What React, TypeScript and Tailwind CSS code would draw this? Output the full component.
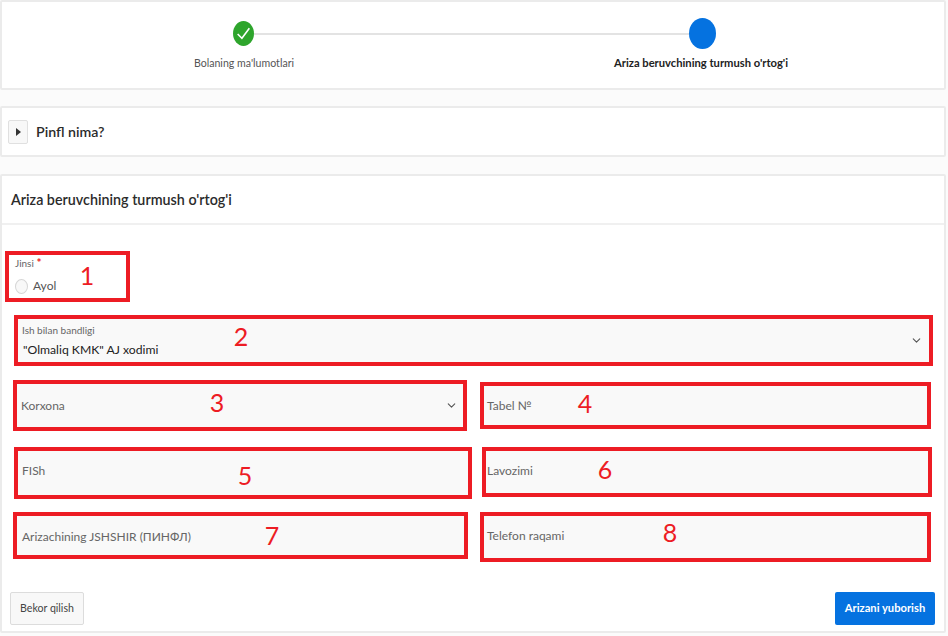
import { ChevronDown } from 'lucide-react';

const font = 'font-["Lato",sans-serif]';
const mark = 'absolute font-["Lato",sans-serif] text-[25px] leading-none text-[#ed1c24] -translate-x-1/2 -translate-y-1/2';

function Field({
  box,
  label,
  num,
  numPos,
  chevron,
}: {
  box: string;
  label: string;
  num: string;
  numPos: string;
  chevron?: boolean;
}) {
  return (
    <div className={`relative flex shrink-0 items-center justify-between border-[4px] border-[#ed1c24] bg-[#f9f9f9] ${box}`}>
      <span className="text-[12px] text-[#666]">{label}</span>
      {chevron && <ChevronDown className="mr-[5px] -mt-[1px] h-[13px] w-[13px] text-[#555]" strokeWidth={2} />}
      <span className={`${mark} ${numPos}`}>{num}</span>
    </div>
  );
}

export default function App() {
  return (
    <div className={`h-[636px] overflow-hidden bg-[#fbfbfb] text-[#2b2b2b] ${font}`}>
      <div className="w-[946px]">
        {/* Stepper */}
        <section className="h-[90px] rounded-[2px] border-2 border-[#ebebeb] bg-white">
          <div className="flex items-center pt-[16px] pl-[231px] pr-[228px]">
            <span className="flex h-[25px] w-[21px] shrink-0 items-center justify-center rounded-[50%] bg-[#2ea52c]">
              <svg viewBox="0 0 16 16" className="h-[17px] w-[17px]" fill="none" stroke="#fff" strokeWidth="1.5">
                <path d="M2.5 8.5 6.5 12.5 13.5 3" />
              </svg>
            </span>
            <span className="h-[2px] flex-1 bg-[#e3e3e3]" />
            <span className="h-[31px] w-[27px] shrink-0 rounded-[50%] bg-[#0572e0]" />
          </div>
          <div className="mt-[6px] flex text-center leading-[16px]">
            <p className="w-[484px] text-[10.6px] text-[#555]">Bolaning ma'lumotlari</p>
            <p className="w-[430px] text-[11.2px] font-bold text-[#222]">Ariza beruvchining turmush o'rtog'i</p>
          </div>
        </section>

        {/* Pinfl */}
        <section className="mt-[16px] flex h-[51px] items-center gap-[8px] rounded-[2px] border-2 border-[#ebebeb] bg-white pl-[6px]">
          <button className="flex h-[24px] w-[20px] items-center justify-center rounded-[2px] border border-[#e0e0e0] bg-[#f8f8f8]">
            <span className="h-0 w-0 border-y-[4px] border-l-[5px] border-y-transparent border-l-[#333]" />
          </button>
          <h2 className="text-[14.2px] font-semibold text-[#2b2b2b]">Pinfl nima?</h2>
        </section>

        {/* Form */}
        <section className="mt-[17px] h-[459px] rounded-[2px] border-2 border-[#ebebeb] bg-white">
          <h2 className="flex h-[49px] items-center border-b-2 border-[#f0f0f0] pl-[9px] text-[14.3px] font-semibold text-[#2b2b2b]">
            Ariza beruvchining turmush o'rtog'i
          </h2>

          <div className="relative mt-[26px] ml-[3px] flex h-[51px] w-[125px] flex-col border-[4px] border-[#ed1c24] pl-[6px]">
            <p className="mt-[2px] text-[10px] leading-[12px] text-[#666]">
              Jinsi <span className="text-[12px] font-bold text-[#ed1c24]">*</span>
            </p>
            <label className="mt-[8px] flex items-center gap-[5px] text-[12px] text-[#555]">
              <span className="h-[15px] w-[13px] rounded-[50%] border border-[#d6d6d6] bg-[#f8f8f8]" />
              Ayol
            </label>
            <span className={`${mark} left-[78px] top-[20px]`}>1</span>
          </div>

          <div className="relative mt-[13px] ml-[12px] flex h-[51px] w-[919px] flex-col border-[4px] border-[#ed1c24] bg-[#f9f9f9] pl-[4px]">
            <p className="mt-[5px] text-[10px] leading-[12px] text-[#666]">Ish bilan bandligi</p>
            <p className="mt-[5px] pl-[1px] text-[12.2px] leading-[18px] text-[#222]">"Olmaliq KMK" AJ xodimi</p>
            <ChevronDown className="absolute right-[6px] top-[15px] h-[13px] w-[13px] text-[#555]" strokeWidth={2} />
            <span className={`${mark} left-[223px] top-[17px]`}>2</span>
          </div>

          <div className="mt-[14px] ml-[11px] flex items-start">
            <Field box="h-[51px] w-[454px] pl-[4px] pt-[1px]" label="Korxona" num="3" numPos="left-[200px] top-[18px]" chevron />
            <Field box="mt-[2px] ml-[13px] h-[47px] w-[451px] pl-[3px]" label="Tabel №" num="4" numPos="left-[101px] top-[17px]" />
          </div>

          <div className="mt-[16px] ml-[12px] flex items-start">
            <Field box="h-[52px] w-[458px] pb-[4px] pl-[4px]" label="FISh" num="5" numPos="left-[227px] top-[24px]" />
            <Field box="ml-[10px] h-[50px] w-[450px] pb-[2px] pl-[1px]" label="Lavozimi" num="6" numPos="left-[119px] top-[18px]" />
          </div>

          <div className="mt-[13px] ml-[11px] flex items-start">
            <Field box="h-[47px] w-[455px] pl-[5px] pt-[2px]" label="Arizachining JSHSHIR (ПИНФЛ)" num="7" numPos="left-[255px] top-[19px]" />
            <Field box="ml-[12px] h-[50px] w-[451px] pb-[2px] pl-[3px]" label="Telefon raqami" num="8" numPos="left-[186px] top-[16px]" />
          </div>

          <div className="mt-[30px] flex justify-between pl-[8px] pr-[9px]">
            <button className="h-[33px] w-[74px] rounded-[2px] border border-[#dcdcdc] bg-[#f8f8f8] text-[10.6px] text-[#444]">
              Bekor qilish
            </button>
            <button className="h-[33px] w-[100px] rounded-[2px] bg-[#0572e0] text-[11.2px] font-bold text-white">
              Arizani yuborish
            </button>
          </div>
        </section>
      </div>
    </div>
  );
}
